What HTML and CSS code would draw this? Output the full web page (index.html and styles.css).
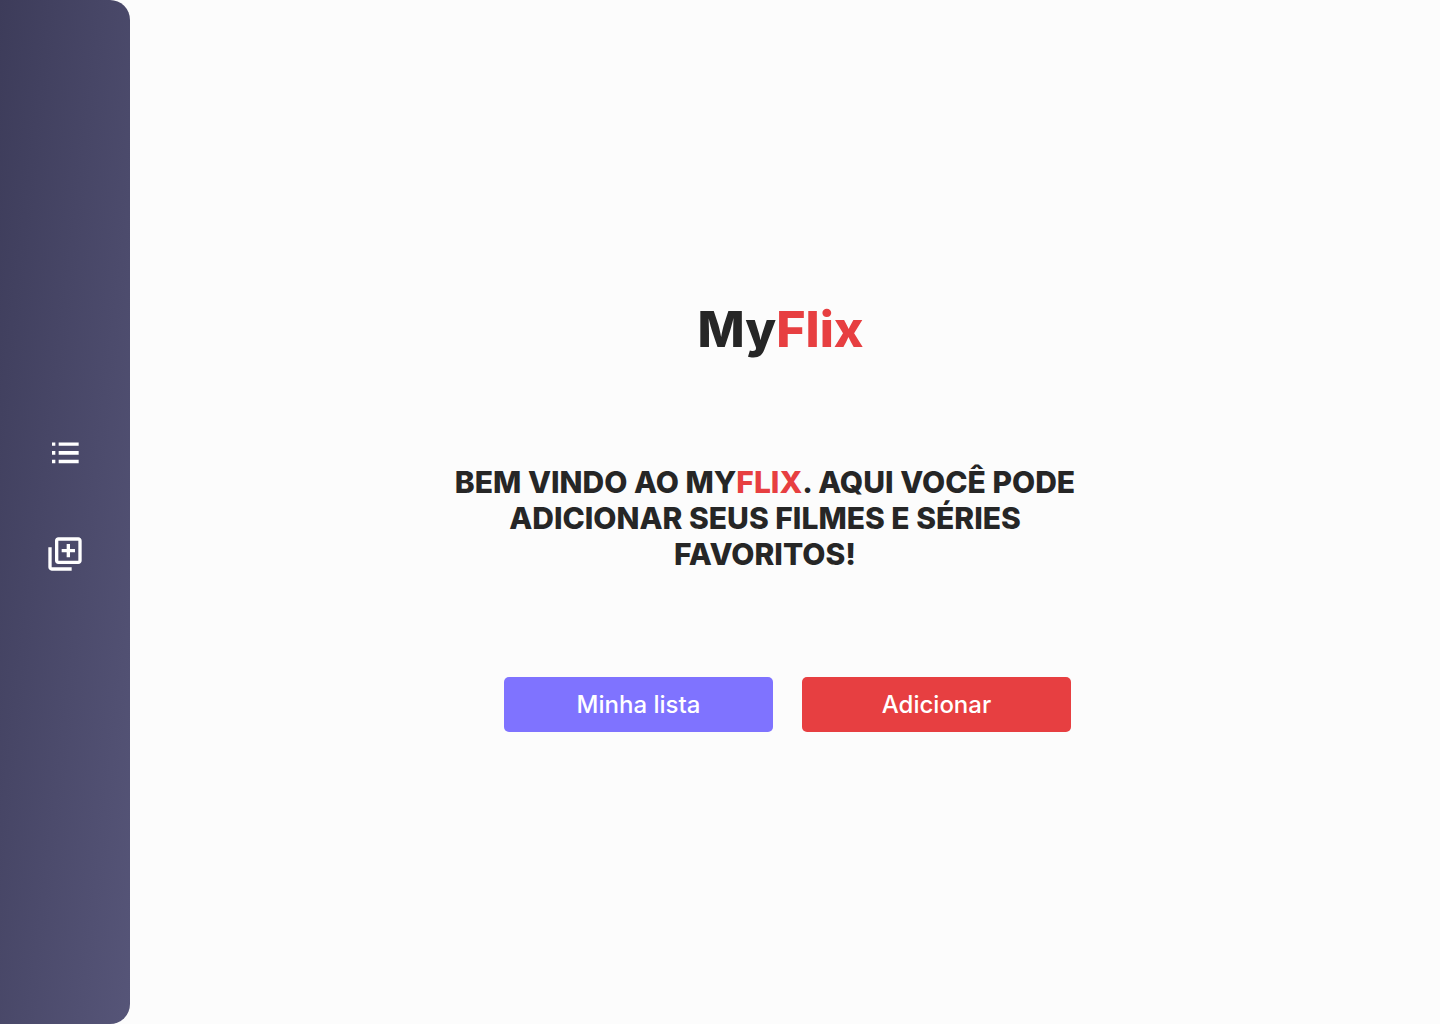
FILE: index.html
```html
<!DOCTYPE html>
<html lang="pt-BR">
<head>
  <meta charset="utf-8">
  <meta name="viewport" content="width=device-width, initial-scale=1">
  <title>MyFlix</title>
  <link rel="stylesheet" href="styles.css">
</head>
<body>
  <nav class="sidebar" aria-label="Menu">
    <a class="sidebar-link" href="#lista" aria-label="Minha lista">
      <svg class="icon" viewBox="0 0 24 24" aria-hidden="true"><path d="M4.200 5.700h2v2h-2zM4.200 10.800h2v2.200h-2zM4.200 16h2v2.100h-2zM8.200 5.700h12v2h-12zM8.200 10.800h12v2.200h-12zM8.200 16h12v2.100h-12z"/></svg>
    </a>
    <a class="sidebar-link" href="#adicionar" aria-label="Adicionar">
      <svg class="icon" viewBox="0 0 24 24" aria-hidden="true"><path d="M4 8H2v12c0 1.100.9 2 2 2h12v-2H4V8zm16-6H8c-1.100 0-2 .9-2 2v12c0 1.100.9 2 2 2h12c1.100 0 2-.9 2-2V4c0-1.100-.9-2-2-2zm0 14H8V4h12v12zm-7-2h2v-3h3V9h-3V6h-2v3h-3v2h3z"/></svg>
    </a>
  </nav>
  <main class="home">
    <h1 class="logo">My<span class="accent">Flix</span></h1>
    <p class="welcome">Bem vindo ao My<span class="accent">Flix</span>. Aqui você pode adicionar seus filmes e séries favoritos!</p>
    <div class="actions">
      <button class="button button-list" type="button">Minha lista</button>
      <button class="button button-add" type="button">Adicionar</button>
    </div>
  </main>
</body>
</html>
```
FILE: styles.css
```css
* {
  box-sizing: border-box;
}

body {
  display: flex;
  min-height: 100vh;
  margin: 0;
  background: #fcfcfc;
  color: #262626;
  font-family: Inter, "Liberation Sans", sans-serif;
}

.sidebar {
  display: flex;
  flex: 0 0 130px;
  flex-direction: column;
  align-items: center;
  justify-content: center;
  gap: 61px;
  padding-bottom: 17px;
  border-radius: 0 20px 20px 0;
  background: linear-gradient(97deg, #3d3c5a, #565578);
}

.sidebar-link {
  display: block;
  color: #fff;
}

.icon {
  display: block;
  width: 40px;
  height: 40px;
  fill: currentColor;
}

.home {
  display: flex;
  flex: 1;
  flex-direction: column;
  align-items: center;
  justify-content: center;
  padding: 4px 40px 0 0;
}

.logo {
  margin: 0 0 103px 31px;
  font-size: 50px;
  font-weight: 800;
  font-variation-settings: "opsz" 32;
  line-height: 64px;
}

.welcome {
  max-width: 632px;
  margin: 0 0 105px;
  font-size: 30px;
  font-weight: 800;
  font-variation-settings: "opsz" 32;
  line-height: 36px;
  text-align: center;
  text-transform: uppercase;
}

.accent {
  color: #e73f41;
}

.actions {
  display: flex;
  gap: 29px;
  margin-left: 45px;
}

.button {
  width: 269px;
  height: 55px;
  padding: 1px 0 0;
  border: 0;
  border-radius: 5px;
  color: #fff;
  font: 500 24px/30px Inter, "Liberation Sans", sans-serif;
  cursor: pointer;
}

.button-list {
  background: #7f73ff;
}

.button-add {
  background: #e73f41;
}
```
